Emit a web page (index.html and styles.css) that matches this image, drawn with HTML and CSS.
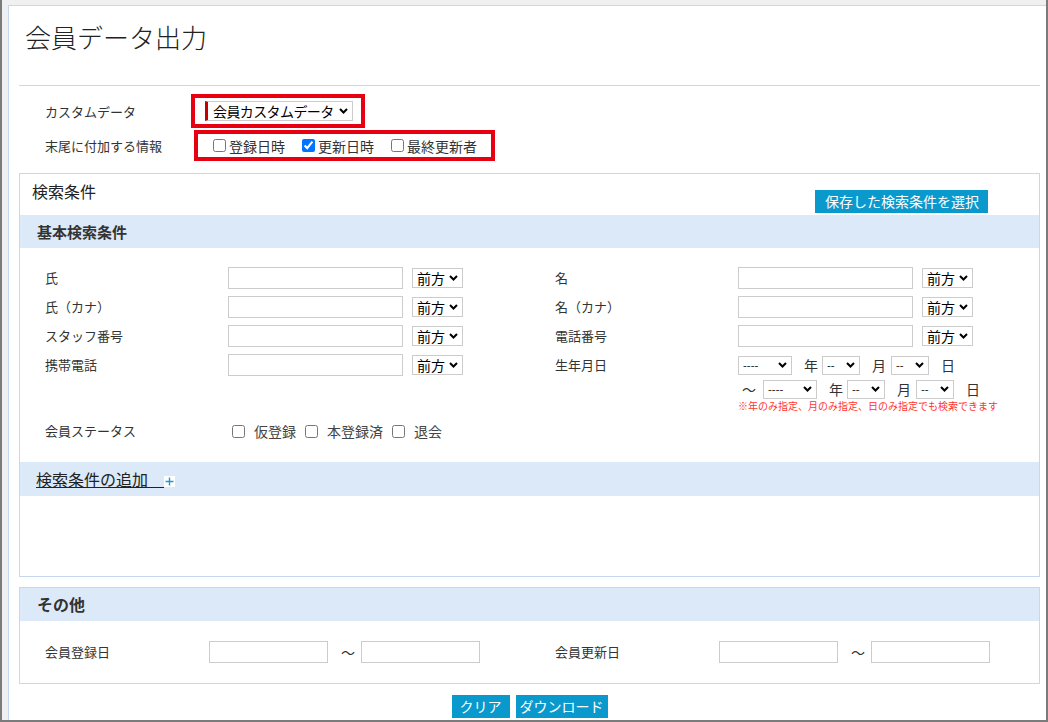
FILE: index.html
```html
<!DOCTYPE html>
<html lang="ja">
<head>
  <meta charset="UTF-8" />
  <meta name="viewport" content="width=device-width, initial-scale=1" />
  <title>会員データ出力</title>
  <link rel="stylesheet" href="styles.css">
</head>
<body>
  <div class="page">
    <div class="page-head">
      <h1>会員データ出力</h1>
    </div>

    <div class="opts">
      <div class="opt-row">
        <span class="opt-label">カスタムデータ</span>
        <div class="mark mark-select">
          <span class="sel">
            <select class="custom-select"><option>会員カスタムデータ</option></select>
            <svg class="chev" width="9" height="6" viewBox="0 0 9 6"><path d="M1 1l3.5 3.5L8 1" fill="none" stroke="#000" stroke-width="2"/></svg>
          </span>
        </div>
      </div>
      <div class="opt-row">
        <span class="opt-label">末尾に付加する情報</span>
        <div class="mark mark-checks">
          <label class="chk"><input type="checkbox">登録日時</label>
          <label class="chk"><input type="checkbox" checked>更新日時</label>
          <label class="chk"><input type="checkbox">最終更新者</label>
        </div>
      </div>
    </div>

    <section class="panel">
      <div class="panel-head">
        <h2>検索条件</h2>
        <button class="btn btn-saved">保存した検索条件を選択</button>
      </div>

      <h3 class="band">基本検索条件</h3>
      <div class="fields">
        <div class="field">
          <label class="f-label">氏</label>
          <input type="text" class="txt">
          <span class="sel"><select class="match"><option>前方</option></select><svg class="chev" width="9" height="6" viewBox="0 0 9 6"><path d="M1 1l3.5 3.5L8 1" fill="none" stroke="#000" stroke-width="2"/></svg></span>
        </div>
        <div class="field">
          <label class="f-label">名</label>
          <input type="text" class="txt">
          <span class="sel"><select class="match"><option>前方</option></select><svg class="chev" width="9" height="6" viewBox="0 0 9 6"><path d="M1 1l3.5 3.5L8 1" fill="none" stroke="#000" stroke-width="2"/></svg></span>
        </div>

        <div class="field">
          <label class="f-label">氏（カナ）</label>
          <input type="text" class="txt">
          <span class="sel"><select class="match"><option>前方</option></select><svg class="chev" width="9" height="6" viewBox="0 0 9 6"><path d="M1 1l3.5 3.5L8 1" fill="none" stroke="#000" stroke-width="2"/></svg></span>
        </div>
        <div class="field">
          <label class="f-label">名（カナ）</label>
          <input type="text" class="txt">
          <span class="sel"><select class="match"><option>前方</option></select><svg class="chev" width="9" height="6" viewBox="0 0 9 6"><path d="M1 1l3.5 3.5L8 1" fill="none" stroke="#000" stroke-width="2"/></svg></span>
        </div>

        <div class="field">
          <label class="f-label">スタッフ番号</label>
          <input type="text" class="txt">
          <span class="sel"><select class="match"><option>前方</option></select><svg class="chev" width="9" height="6" viewBox="0 0 9 6"><path d="M1 1l3.5 3.5L8 1" fill="none" stroke="#000" stroke-width="2"/></svg></span>
        </div>
        <div class="field">
          <label class="f-label">電話番号</label>
          <input type="text" class="txt">
          <span class="sel"><select class="match"><option>前方</option></select><svg class="chev" width="9" height="6" viewBox="0 0 9 6"><path d="M1 1l3.5 3.5L8 1" fill="none" stroke="#000" stroke-width="2"/></svg></span>
        </div>

        <div class="field">
          <label class="f-label">携帯電話</label>
          <input type="text" class="txt">
          <span class="sel"><select class="match"><option>前方</option></select><svg class="chev" width="9" height="6" viewBox="0 0 9 6"><path d="M1 1l3.5 3.5L8 1" fill="none" stroke="#000" stroke-width="2"/></svg></span>
        </div>
        <div class="field">
          <label class="f-label">生年月日</label>
          <div class="dob">
            <div class="dob-line">
              <span class="sel"><select class="ymd ymd-y"><option>----</option></select><svg class="chev" width="9" height="6" viewBox="0 0 9 6"><path d="M1 1l3.5 3.5L8 1" fill="none" stroke="#000" stroke-width="2"/></svg></span>
              <span class="unit">年</span>
              <span class="sel"><select class="ymd"><option>--</option></select><svg class="chev" width="9" height="6" viewBox="0 0 9 6"><path d="M1 1l3.5 3.5L8 1" fill="none" stroke="#000" stroke-width="2"/></svg></span>
              <span class="unit unit-m">月</span>
              <span class="sel"><select class="ymd"><option>--</option></select><svg class="chev" width="9" height="6" viewBox="0 0 9 6"><path d="M1 1l3.5 3.5L8 1" fill="none" stroke="#000" stroke-width="2"/></svg></span>
              <span class="unit unit-m">日</span>
            </div>
            <div class="dob-line">
              <span class="tilde">〜</span>
              <span class="sel"><select class="ymd ymd-y"><option>----</option></select><svg class="chev" width="9" height="6" viewBox="0 0 9 6"><path d="M1 1l3.5 3.5L8 1" fill="none" stroke="#000" stroke-width="2"/></svg></span>
              <span class="unit">年</span>
              <span class="sel"><select class="ymd"><option>--</option></select><svg class="chev" width="9" height="6" viewBox="0 0 9 6"><path d="M1 1l3.5 3.5L8 1" fill="none" stroke="#000" stroke-width="2"/></svg></span>
              <span class="unit unit-m">月</span>
              <span class="sel"><select class="ymd"><option>--</option></select><svg class="chev" width="9" height="6" viewBox="0 0 9 6"><path d="M1 1l3.5 3.5L8 1" fill="none" stroke="#000" stroke-width="2"/></svg></span>
              <span class="unit unit-m">日</span>
            </div>
            <p class="note">※年のみ指定、月のみ指定、日のみ指定でも検索できます</p>
          </div>
        </div>

        <div class="field field-wide">
          <label class="f-label">会員ステータス</label>
          <label class="st"><input type="checkbox">仮登録</label>
          <label class="st"><input type="checkbox">本登録済</label>
          <label class="st"><input type="checkbox">退会</label>
        </div>
      </div>

      <div class="band band-add">
        <a href="#" class="add-link">検索条件の追加　</a><svg class="plus" width="11" height="11" viewBox="0 0 11 11"><rect width="11" height="11" fill="#fff"/><path d="M5.5 1.5v8M1.5 5.5h8" stroke="#1a9bd0" stroke-width="1.4"/></svg>
      </div>
      <div class="extra"></div>
    </section>

    <section class="panel panel-other">
      <h3 class="band band-other">その他</h3>
      <div class="dates">
        <div class="field">
          <label class="f-label d-label">会員登録日</label>
          <input type="text" class="txt d-txt">
          <span class="d-tilde">〜</span>
          <input type="text" class="txt d-txt">
        </div>
        <div class="field">
          <label class="f-label d-label">会員更新日</label>
          <input type="text" class="txt d-txt">
          <span class="d-tilde">〜</span>
          <input type="text" class="txt d-txt">
        </div>
      </div>
    </section>

    <div class="actions">
      <button class="btn">クリア</button>
      <button class="btn btn-dl">ダウンロード</button>
    </div>
  </div>
</body>
</html>
```

FILE: styles.css
```css
* {
  box-sizing: border-box;
}
html,
body {
  margin: 0;
  height: 100%;
}
body {
  background: #f0f0f0;
  border: 2px solid #7b7b7b;
  border-top: 0;
  padding: 5px 0 0 6px;
  overflow: hidden;
  font-family: "Noto Sans CJK JP", "Noto Sans", sans-serif;
  font-size: 13px;
  color: #333;
}
.page {
  height: 100%;
  background: #fff;
  border-top: 1px solid #c5d9ee;
  border-left: 1px solid #c5d9ee;
}
.page-head {
  height: 80px;
  margin: 0 6px 0 10px;
  border-bottom: 1px solid #c5d9ee;
}
h1 {
  margin: 0;
  padding: 11px 0 0 6px;
  font-size: 26px;
  line-height: 40px;
  font-weight: 300;
  color: #222;
}

/* dropdowns: plain box + drawn chevron */
select {
  appearance: none;
  -webkit-appearance: none;
  border: 1px solid #ccc;
  border-radius: 0;
  background: #fff;
  color: #000;
  font-family: inherit;
  padding: 0 0 0 4px;
  outline: none;
}
.sel {
  position: relative;
  display: inline-flex;
  flex: none;
}
.chev {
  position: absolute;
  right: 5px;
  top: 50%;
  margin-top: -3px;
  pointer-events: none;
}

/* output options */
.opts {
  padding: 8px 0 0 36px;
}
.opt-row {
  display: flex;
  align-items: center;
}
.opt-row + .opt-row {
  margin-top: 2px;
}
.opt-label {
  width: 146px;
}
.mark {
  border: 4px solid #e60012;
}
.mark-select {
  display: flex;
  padding: 3px 8px 3px 10px;
}
.custom-select {
  width: 148px;
  height: 20px;
  padding-left: 5px;
  border-left: 3px solid #c40000;
  font-size: 14px;
  line-height: 18px;
  letter-spacing: -0.6px;
}
.mark-checks {
  display: flex;
  align-items: center;
  height: 31px;
  margin-left: 3px;
  padding: 0 14px 0 11px;
}
.chk {
  display: flex;
  align-items: center;
  font-size: 14px;
  color: #333;
}
.chk + .chk {
  margin-left: 13px;
}
.chk input,
.st input {
  width: 13px;
  height: 13px;
  margin: 0 3px 0 4px;
}

/* panels */
.panel {
  margin: 12px 6px 0 10px;
  border: 1px solid #c5d9ee;
}
.panel-head {
  display: flex;
  justify-content: space-between;
  align-items: flex-start;
  height: 41px;
}
h2 {
  margin: 0;
  padding: 7px 0 0 12px;
  font-size: 16px;
  line-height: 20px;
  font-weight: normal;
  color: #222;
}
.btn {
  height: 23px;
  padding: 0 8px;
  border: 0;
  background: #0a99cc;
  color: #fff;
  font-family: inherit;
  font-size: 14px;
  line-height: 23px;
}
.btn-saved {
  margin: 16px 51px 0 0;
  padding: 0 9px 0 10px;
}
.btn-dl {
  padding: 0 4px;
}
.band {
  margin: 0;
  height: 33px;
  padding-left: 17px;
  background: #dbe9f8;
  font-size: 15px;
  line-height: 33px;
  font-weight: bold;
  color: #333;
}

/* search fields */
.fields {
  display: grid;
  grid-template-columns: 510px auto;
  row-gap: 7px;
  padding: 19px 0 20px 25px;
}
.field {
  display: flex;
  align-items: flex-start;
}
.field-wide {
  grid-column: 1 / -1;
  margin-top: 1px;
  align-items: center;
  height: 22px;
}
.f-label {
  width: 183px;
  line-height: 22px;
  color: #333;
}
.txt {
  width: 175px;
  height: 22px;
  margin: 0 9px 0 0;
  border: 1px solid #ccc;
  padding: 0 3px;
}
.match {
  width: 51px;
  height: 20px;
  margin-top: 1px;
  font-size: 14px;
  line-height: 18px;
}
.dob-line {
  display: flex;
  align-items: center;
  height: 22px;
}
.dob-line + .dob-line {
  margin-top: 2px;
}
.ymd {
  width: 38px;
  height: 19px;
  font-size: 11px;
}
.ymd-y {
  width: 54px;
}
.unit {
  margin: 0 4px 0 12px;
  font-size: 14px;
}
.unit-m {
  margin: 0 5px 0 12px;
}
.tilde {
  margin: 0 7px 0 4px;
  font-size: 14px;
}
.note {
  margin: 0;
  font-size: 10px;
  line-height: 12px;
  color: #f33;
}
.st {
  display: flex;
  align-items: center;
  margin-right: 5px;
  font-size: 14px;
  color: #444;
}
.st input {
  margin: 0 9px 0 4px;
}

.band-add {
  height: 34px;
  line-height: 34px;
  padding-left: 16px;
  font-weight: normal;
}
.add-link {
  color: #222;
  text-decoration: underline;
  font-size: 16px;
}
.plus {
  vertical-align: -1px;
}
.extra {
  height: 80px;
}

/* other */
.panel-other {
  margin-top: 10px;
}
.band-other {
  font-size: 16px;
  padding-left: 17px;
}
.dates {
  display: grid;
  grid-template-columns: 510px auto;
  padding: 20px 0 20px 25px;
}
.d-label {
  width: 164px;
}
.d-txt {
  width: 119px;
  margin: 0;
}
.d-tilde {
  margin: 0 6px 0 13px;
  font-size: 14px;
  line-height: 22px;
}

.actions {
  display: flex;
  justify-content: center;
  gap: 6px;
  margin: 11px 6px 0 10px;
}
```
